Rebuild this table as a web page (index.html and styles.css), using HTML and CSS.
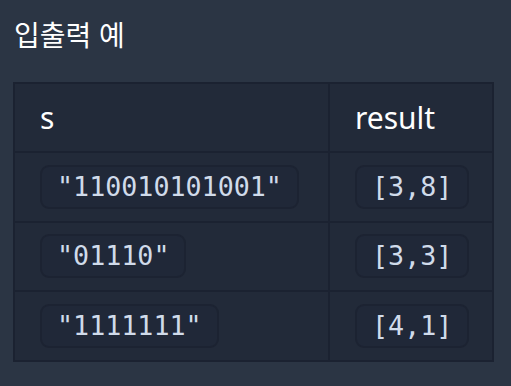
FILE: index.html
```html
<!DOCTYPE html>
<html lang="ko">
<head>
<meta charset="utf-8">
<link rel="stylesheet" href="styles.css">
</head>
<body>
<h5 class="title">입출력 예</h5>
<table class="io">
  <thead>
    <tr><th class="c1">s</th><th class="c2">result</th></tr>
  </thead>
  <tbody>
    <tr><td><code>"110010101001"</code></td><td><code>[3,8]</code></td></tr>
    <tr><td><code>"01110"</code></td><td><code>[3,3]</code></td></tr>
    <tr><td><code>"1111111"</code></td><td><code>[4,1]</code></td></tr>
  </tbody>
</table>
</body>
</html>
```
FILE: styles.css
```css
html, body {
  margin: 0;
  padding: 0;
  background: #2b3544;
}
body {
  padding: 0 17px 0 13px;
  font-family: "Noto Sans", "Noto Sans CJK KR", sans-serif;
  color: #ffffff;
}
.title {
  margin: 0;
  padding: 14px 0 0 1px;
  height: 82px;
  box-sizing: border-box;
  font-size: 28px;
  font-weight: 400;
  line-height: 40px;
  font-family: "Noto Sans CJK KR", sans-serif;
}
.io {
  width: 481px;
  border-collapse: collapse;
  background: #222a39;
  border: 2px solid #1b2231;
}
.io th, .io td {
  border: 2px solid #1b2231;
  text-align: left;
  padding: 0 0 0 25px;
  box-sizing: border-box;
}
.io th {
  height: 69px;
  font-weight: 400;
  font-size: 30px;
  color: #ffffff;
}
.io td {
  height: 69.5px;
}
.io .c1 { width: 315px; }
code {
  display: inline-block;
  font-family: "DejaVu Sans Mono", monospace;
  font-size: 26.7px;
  line-height: 38px;
  padding: 1px 15px;
  color: #d0dbea;
  background: #202838;
  border: 2px solid #1c2332;
  border-radius: 9px;
}
```
